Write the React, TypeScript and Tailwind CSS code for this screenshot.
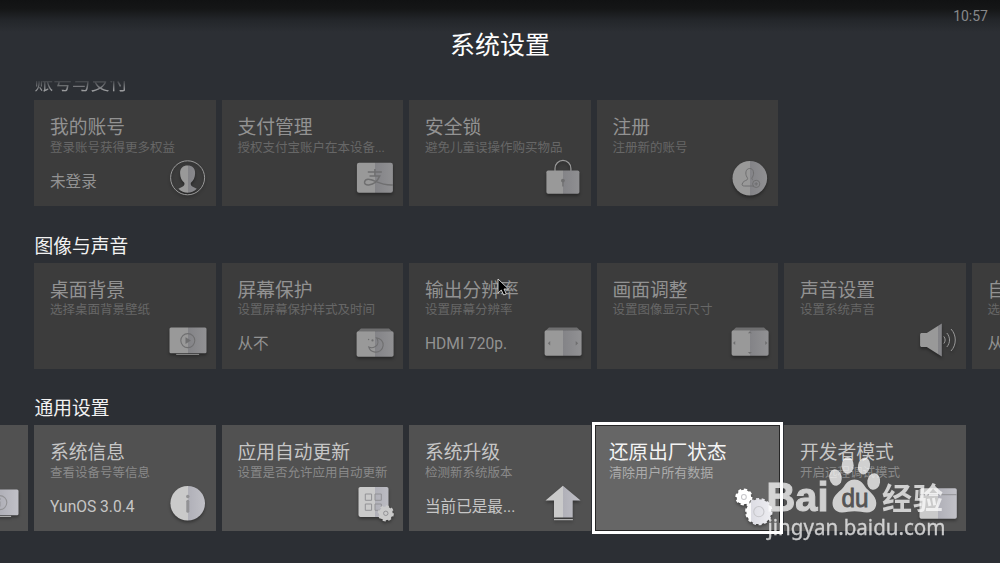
import { ReactNode } from "react";
import clsx from "clsx";

type Tone = "dim" | "normal" | "focus";

interface Setting {
    title: string;
    desc: string;
    value?: string;
    icon: ReactNode;
    focused?: boolean;
}

interface Section {
    name: string;
    tone: Tone;
    headClass: string;
    rowClass: string;
    items: Setting[];
}

// shapes are filled with "main", details on them are drawn with "detail"
const main = "var(--icon-main)";
const detail = "var(--icon-detail)";

const iconTones: Record<Tone, string> = {
    dim: "[--icon-main:url(#split-dim)] [--icon-detail:#6f6f70] [--icon-line:#999999]",
    normal: "[--icon-main:url(#split-normal)] [--icon-detail:#929295] [--icon-line:#cacaca]",
    focus: "[--icon-main:url(#split-focus)] [--icon-detail:#c6c6ca] [--icon-line:#ffffff]",
};

const Gear = ({ cx, cy, r, teeth, hole, fill }: { cx: number; cy: number; r: number; teeth: number; hole: number; fill: string }) => (
    <g>
        <circle cx={cx} cy={cy} r={r - 1.1} fill={fill} />
        <circle cx={cx} cy={cy} r={r - 0.9} fill="none" stroke={fill} strokeWidth="2" pathLength={teeth * 2} strokeDasharray="1.1 0.9" />
        <circle cx={cx} cy={cy} r={hole} fill="none" stroke={detail} strokeWidth="1" />
    </g>
);

const AccountIcon = (
    <g>
        <circle cx="21.6" cy="21.8" r="17" fill="none" stroke="var(--icon-line)" strokeWidth="1" />
        <path d="M21.6 9.6c-4.600 0-7.500 2.600-7.500 7.600 0 4.400 1.800 7.600 4.200 9.600.7 1.600-.4 3.400-2.400 4.200l-3.500 1.800c2.500 2.600 6 3.900 9.200 3.900s6.800-1.300 9.200-3.900l-3.500-1.800c-2-.8-3.100-2.600-2.400-4.200 2.400-2 4.200-5.200 4.200-9.600 0-5-2.900-7.600-7.500-7.600z" fill={main} />
    </g>
);

const PayIcon = (
    <g>
        <rect x="3.900" y="6.800" width="36" height="30" rx="2.200" fill={main} />
        <path d="M14.800 16h14M21.900 13v6.600M16.500 20h10.200c-1.600 4-5.500 8.300-10.800 8.900-3.300.3-4.800-1.400-4.300-3.200.6-2 3.300-2.800 6.500-1.900 5 1.400 10.500 5.700 21.800 5.200" fill="none" stroke={detail} strokeWidth="1.500" />
    </g>
);

const LockIcon = (
    <g>
        <path d="M14 15v-2.600a7.900 7.900 0 0 1 15.900 0V15" fill="none" stroke="var(--icon-line)" strokeWidth="1.200" />
        <rect x="5.400" y="14.600" width="33" height="23.100" rx="1.700" fill={main} />
        <circle cx="21.900" cy="24.600" r="1.900" fill={detail} />
        <path d="M21.900 25v5.500" stroke={detail} strokeWidth="1.300" />
    </g>
);

const RegisterIcon = (
    <g>
        <circle cx="21.800" cy="22.200" r="17.300" fill={main} />
        <path d="M26 30H16.500c-2 0-2.600-.7-2.300-2 .5-2.600 3.200-3.200 5-4.300.7-.6.500-1.500-.3-2.700-1-1.600-1.300-3.500-.9-5.300.5-2.200 1.900-3.200 3.700-3.200s3.300 1 3.700 3.200c.4 1.800.1 3.700-.9 5.300-.9 1.300-.9 2.200.2 2.900" fill="none" stroke={detail} strokeWidth="1" />
        <circle cx="28.200" cy="27.900" r="3.600" fill="none" stroke={detail} strokeWidth="1" />
        <path d="M26.500 27.900h3.400M28.200 26.200v3.400" stroke={detail} strokeWidth="1" />
    </g>
);

const Monitor = ({ children }: { children: ReactNode }) => (
    <g>
        <path d="M10.200 34.900h22.900v.9H10.200z" fill="var(--icon-line)" />
        <rect x="3.500" y="8.600" width="37" height="25.600" rx="1.500" fill={main} />
        <circle cx="21.800" cy="21.600" r="7" fill="none" stroke={detail} strokeWidth="1.100" />
        {children}
    </g>
);

// screen panel with a folded top edge
const Panel = ({ y, children }: { y: number; children: ReactNode }) => (
    <g>
        <path d={`M8 ${y - 2.600}h28l3.200 3H4.800z`} fill={detail} />
        <rect x="3.600" y={y} width="37" height="25.500" rx="1.800" fill={main} />
        {children}
    </g>
);

const SoundIcon = (
    <g>
        <path d="M6 14h4.800L25.800 4.600v33L10.800 28H6c-1.300 0-1.900-.6-1.900-1.800V15.800C4.100 14.600 4.700 14 6 14z" fill={main} />
        <path d="M27.800 17.400c1.800 2 1.800 5.200 0 7.200M30.800 14c3.600 4 3.600 10 0 14M35 10c5.700 6 5.700 16 0 22" fill="none" stroke="var(--icon-line)" strokeWidth="1" />
    </g>
);

const InfoIcon = (
    <g>
        <circle cx="21.700" cy="22.300" r="17.300" fill={main} />
        <circle cx="21.800" cy="15.500" r="1.700" fill={detail} />
        <path d="M21.800 20.300v10" stroke={detail} strokeWidth="3" strokeLinecap="round" />
    </g>
);

const AppsIcon = (
    <g>
        <rect x="5.500" y="5.900" width="30" height="30" rx="1.800" fill={main} />
        <path d="M12.300 13h6.300v6.300h-6.300zM22 13h6.300v6.300H22zM12.300 23h6.300v6.300h-6.300zM22 23h6.300v6.300H22z" fill="none" stroke={detail} strokeWidth="1" />
        <Gear cx={32.800} cy={32.300} r={8} teeth={8} hole={2.200} fill="var(--icon-line)" />
    </g>
);

const UpgradeIcon = (
    <g>
        <path d="M21.900 4.800l17.700 14.800h-7.900v17H13v-17H4.500z" fill={main} />
        <path d="M13 38.700h18.900" stroke="var(--icon-line)" strokeWidth="1" />
    </g>
);

const ResetIcon = (
    <g>
        <Gear cx={15.200} cy={15.300} r={8.100} teeth={8} hole={2.300} fill="var(--icon-line)" />
        <Gear cx={29.500} cy={29.300} r={13} teeth={14} hole={4.900} fill={main} />
    </g>
);

const DeveloperIcon = (
    <g>
        <rect x="3.500" y="7.300" width="37.300" height="30.500" rx="1.800" fill={main} />
        <path d="M3.500 13.700h37.300" stroke={detail} strokeWidth="1" />
    </g>
);

const sections: Section[] = [
    {
        name: "账号与支付",
        tone: "dim",
        headClass: "text-[#b2b3b5] [mask-image:linear-gradient(transparent_30%,black_85%)]",
        rowClass: "ml-[34.375px]",
        items: [
            { title: "我的账号", desc: "登录账号获得更多权益", value: "未登录", icon: AccountIcon },
            { title: "支付管理", desc: "授权支付宝账户在本设备...", icon: PayIcon },
            { title: "安全锁", desc: "避免儿童误操作购买物品", icon: LockIcon },
            { title: "注册", desc: "注册新的账号", icon: RegisterIcon },
        ],
    },
    {
        name: "图像与声音",
        tone: "dim",
        headClass: "text-[#f2f2f2]",
        rowClass: "ml-[34.375px]",
        items: [
            {
                title: "桌面背景",
                desc: "选择桌面背景壁纸",
                icon: <Monitor><path d="M19.500 18.300l5.400 3.300-5.400 3.300z" fill={detail} /></Monitor>,
            },
            {
                title: "屏幕保护",
                desc: "设置屏幕保护样式及时间",
                value: "从不",
                icon: (
                    <Panel y={12.200}>
                        <path d="M23.500 18.900c4.300.5 7 3.700 6.600 7.700-.5 4.300-4 6.900-8 6.500-3.200-.3-5.700-2.300-6.400-5.200 2.300 1.100 5.300.9 7.200-.7 2.400-2 2.700-5.500.6-8.300z" fill="none" stroke={detail} strokeWidth="1.100" />
                        <circle cx="19.500" cy="21.400" r="1.100" fill={detail} />
                        <circle cx="15.600" cy="20.500" r=".7" fill={detail} />
                    </Panel>
                ),
            },
            {
                title: "输出分辨率",
                desc: "设置屏幕分辨率",
                value: "HDMI 720p.",
                icon: <Panel y={11.200}><path d="M9.200 22l-2.400 2.200 2.400 2.200zM34.700 22l2.400 2.200-2.400 2.200z" fill={detail} /></Panel>,
            },
            {
                title: "画面调整",
                desc: "设置图像显示尺寸",
                icon: (
                    <Panel y={11.200}>
                        <path d="M7.200 22l-2.200 2 2.200 2zM37.200 22l2.200 2-2.200 2zM19.900 14.200l2-2 2 2zM19.900 33l2 2 2-2z" fill={detail} />
                    </Panel>
                ),
            },
            { title: "声音设置", desc: "设置系统声音", icon: SoundIcon },
            { title: "自动待机", desc: "选择自动待机时间", value: "从不", icon: null },
        ],
    },
    {
        name: "通用设置",
        tone: "normal",
        headClass: "text-[#f2f2f2]",
        rowClass: "-ml-[153.125px]",
        items: [
            {
                title: "",
                desc: "",
                icon: (
                    <Monitor>
                        <path d="M21.800 20.500v5" stroke={detail} strokeWidth="1.400" />
                        <circle cx="21.800" cy="18" r=".9" fill={detail} />
                    </Monitor>
                ),
            },
            { title: "系统信息", desc: "查看设备号等信息", value: "YunOS 3.0.4", icon: InfoIcon },
            { title: "应用自动更新", desc: "设置是否允许应用自动更新", icon: AppsIcon },
            { title: "系统升级", desc: "检测新系统版本", value: "当前已是最...", icon: UpgradeIcon },
            { title: "还原出厂状态", desc: "清除用户所有数据", icon: ResetIcon, focused: true },
            { title: "开发者模式", desc: "开启远程调试模式", icon: DeveloperIcon },
        ],
    },
];

const SettingCard = ({ item, tone }: { item: Setting; tone: Tone }) => {
    const iconTone = iconTones[item.focused ? "focus" : tone];

    return (
        <div
            className={clsx(
                "flex shrink-0 flex-col justify-between whitespace-nowrap",
                item.focused
                    ? "relative z-10 -mx-[4.7px] -my-[3px] h-[112.25px] w-[190.65px] border-3 border-white bg-[#666666] pt-[16.5px] pr-[5.5px] pb-[5.5px] pl-[13.8px] shadow-[inset_0_0_0_1px_#262626]"
                    : "h-[106.25px] w-[181.25px] pt-[17px] pr-1.5 pb-1.5 pl-[15.6px]",
                !item.focused && (tone === "dim" ? "bg-[#3c3c3c]" : "bg-[#515151]")
            )}
        >
            <div>
                <div
                    className={clsx(
                        item.focused ? "h-[22px] text-[19.6px] leading-[22px] text-[#f4f4f4]" : "h-[21.5px] text-[18.75px] leading-[22px]",
                        !item.focused && (tone === "dim" ? "text-[#929292]" : "text-[#c6c6c6]")
                    )}
                >
                    {item.title}
                </div>
                <div
                    className={clsx(
                        "h-[17px] leading-[18px]",
                        item.focused ? "text-[13.06px] text-[#acacac]" : "text-[12.5px]",
                        !item.focused && (tone === "dim" ? "text-[#676767]" : "text-[#898989]")
                    )}
                >
                    {item.desc}
                </div>
            </div>
            <div className="flex items-start justify-between">
                <div
                    className={clsx(
                        "pt-[15.5px] text-[15.6px] leading-5",
                        tone === "dim" ? "text-[#929292]" : "text-[#c6c6c6]"
                    )}
                >
                    {item.value}
                </div>
                <svg
                    viewBox="0 0 44 44"
                    className={clsx("shrink-0 overflow-visible drop-shadow-[0_2px_1.5px_rgba(0,0,0,0.35)]", item.focused ? "size-[46px]" : "size-11", iconTone)}
                >
                    {item.icon}
                </svg>
            </div>
        </div>
    );
};

const SplitGradient = ({ id, light, shade, end }: { id: string; light: string; shade: string; end: string }) => (
    <linearGradient id={id} gradientUnits="userSpaceOnUse" x1="2" y1="0" x2="41.800" y2="0">
        <stop offset="0.500" stopColor={light} />
        <stop offset="0.500" stopColor={shade} />
        <stop offset="1" stopColor={end} />
    </linearGradient>
);

const Watermark = () => (
    <svg width="190" height="90" viewBox="762 454 190 90" className="absolute top-[454px] left-[762px] z-20">
        <g fill="#fff" opacity="0.73">
            <text x="766.500" y="511" fontSize="40" fontWeight="700" textLength="62" lengthAdjust="spacingAndGlyphs" fontFamily="Liberation Sans, sans-serif" stroke="#fff" strokeWidth="1">Bai</text>
            <ellipse cx="835.500" cy="477.500" rx="6.200" ry="8.300" transform="rotate(-12 835.500 477.500)" />
            <ellipse cx="847.700" cy="465.500" rx="6" ry="8.500" />
            <ellipse cx="864" cy="466" rx="6" ry="8.500" transform="rotate(12 864 466)" />
            <ellipse cx="873.700" cy="481.500" rx="6.400" ry="8.300" transform="rotate(8 873.700 481.500)" />
            <path d="M854.500 479.500c-5 0-8 3-10.500 7-2.500 4-11.500 8.500-11.500 16.500 0 6 4 9.500 9.500 9.500 4 0 8-1.200 12.500-1.200s8.500 1.200 12.500 1.200c5.500 0 9.300-3.500 9.300-9.500 0-8-8.500-12-11.300-16.500-2.500-4-5.500-7-10.500-7z" />
            <text x="882" y="508.500" fontSize="30" fontWeight="700" textLength="61" fontFamily="Noto Sans CJK SC, sans-serif">经验</text>
            <text x="767.500" y="535" fontSize="21.500" textLength="178" lengthAdjust="spacingAndGlyphs" fontFamily="Noto Sans, sans-serif" stroke="#fff" strokeWidth="0.300">jingyan.baidu.com</text>
        </g>
        <text x="841.500" y="506.500" fontSize="25" textLength="27" lengthAdjust="spacingAndGlyphs" fontFamily="Liberation Sans, sans-serif" fill="#555" stroke="#555" strokeWidth="0.800">du</text>
    </svg>
);

export const SystemSettingsPage = () => {
    return (
        <div className="relative flex h-[563px] w-[1000px] flex-col overflow-hidden bg-[#2c2f34] font-['Roboto','Noto_Sans_CJK_SC',sans-serif]">
            <svg className="absolute size-0">
                <defs>
                    <SplitGradient id="split-dim" light="#999999" shade="#838387" end="#929294" />
                    <SplitGradient id="split-normal" light="#cacaca" shade="#b0b0b8" end="#c2c2c8" />
                    <SplitGradient id="split-focus" light="#fbfbfb" shade="#dcdce3" end="#eeeef2" />
                </defs>
            </svg>

            {/* Header */}
            <header className="grid h-[81px] shrink-0 grid-cols-3 bg-[linear-gradient(#111213_0px,#151617_9px,#23262a_20px,#2c2f34_32px)]">
                <div />
                <h1 className="pt-[28.5px] text-center text-[25px] leading-[34px] text-white">系统设置</h1>
                <div className="pt-1.5 pr-3 text-right text-[14px] leading-5 text-[#87888a]">10:57</div>
            </header>

            {/* Settings list, scrolled down a little */}
            <main className="min-h-0 flex-1 overflow-hidden">
                <div className="-mt-[10.5px]">
                    {sections.map(section => (
                        <section key={section.name} className="h-[162.5px]">
                            <h2 className={clsx("mb-[3.5px] h-[26px] pt-[1.5px] pl-[34.4px] text-[18.75px] leading-6", section.headClass)}>{section.name}</h2>
                            <div className={clsx("flex gap-[6.25px]", section.rowClass)}>
                                {section.items.map((item, i) => (
                                    <SettingCard key={i} item={item} tone={section.tone} />
                                ))}
                            </div>
                        </section>
                    ))}
                </div>
            </main>

            {/* Mouse pointer */}
            <svg width="14" height="20" viewBox="0 0 14 20" className="absolute top-[278px] left-[497px] z-20">
                <path d="M1 1v14l3.300-3 2.400 5 2.600-1.100-2.300-4.900h4.500z" fill="#000" stroke="#d8d8d8" strokeWidth="0.900" />
            </svg>

            <Watermark />
        </div>
    );
};

export default SystemSettingsPage;
